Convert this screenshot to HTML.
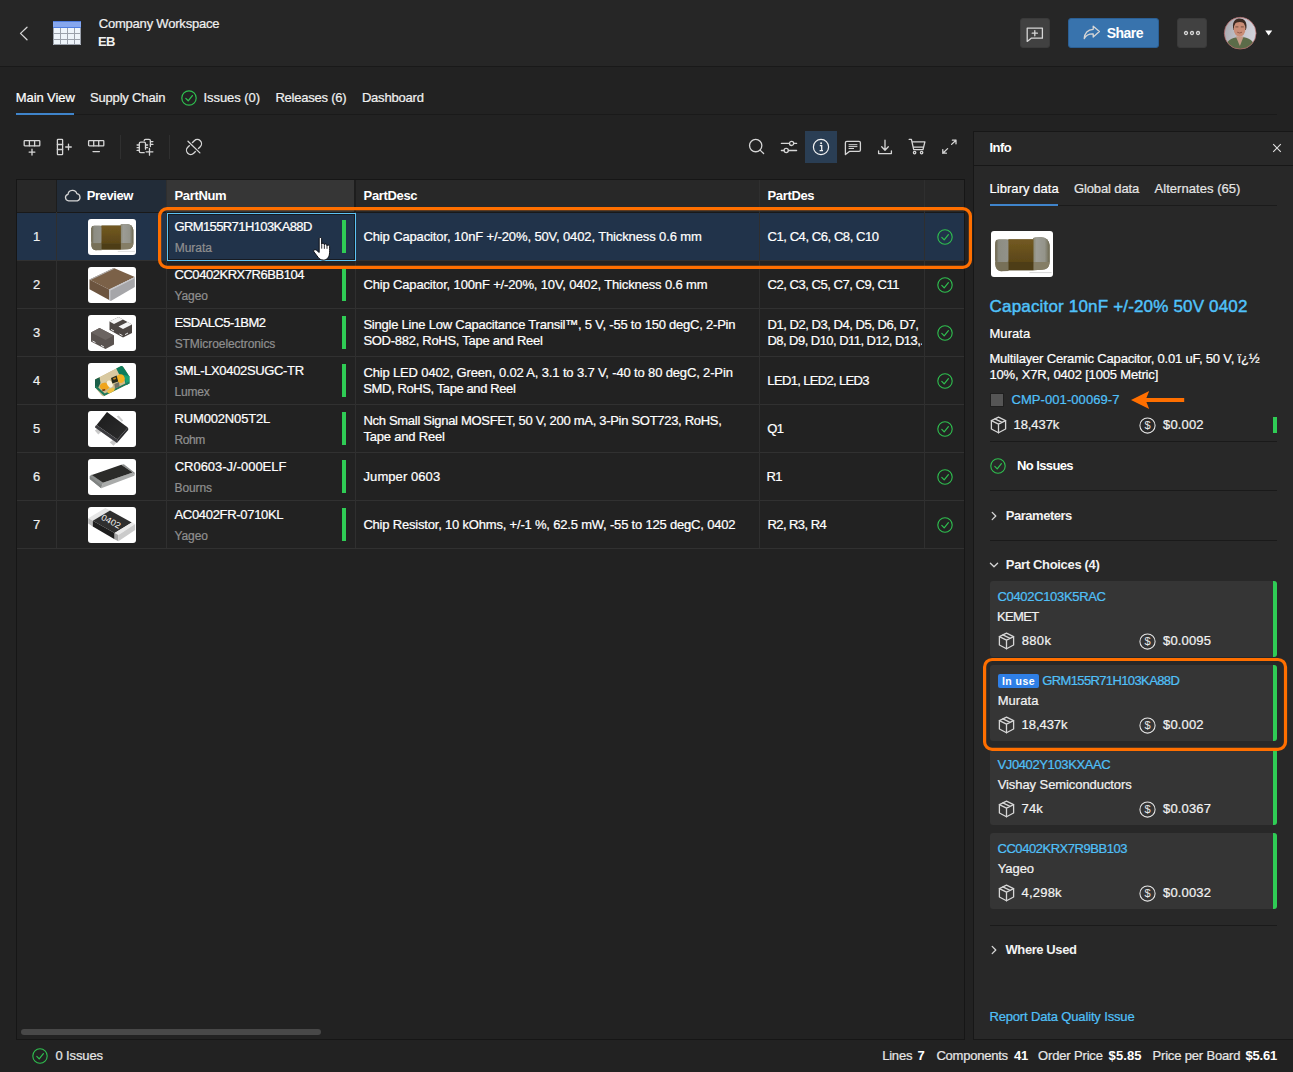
<!DOCTYPE html>
<html lang="en">
<head>
<meta charset="utf-8">
<title>BOM - Company Workspace</title>
<style>
*{box-sizing:border-box;margin:0;padding:0}
html,body{width:1293px;height:1072px;overflow:hidden;background:#222222}
body{position:relative;font-family:"Liberation Sans",sans-serif;font-size:13px;color:#f0f0f0;-webkit-font-smoothing:antialiased}
.abs{position:absolute}
.t{position:absolute;white-space:nowrap;line-height:16px;height:16px}
.t{-webkit-text-stroke:0.22px currentColor}
.b{font-weight:bold;-webkit-text-stroke:0}
.link{color:#50c0f8}
.gray{color:#8f8f8f}
svg{position:absolute;overflow:visible}
.ic{fill:none;stroke:#d6d6d6;stroke-width:1.3;stroke-linecap:round;stroke-linejoin:round}
/* header */
#hdr{left:0;top:0;width:1293px;height:67px;background:#262626;border-bottom:1px solid #191919}
.hbtn{position:absolute;top:18px;height:30px;border-radius:3px;background:#414141;border:1px solid #3a3a3a}
#share{left:1068px;width:91px;background:#3873ad;border:1px solid #2b5f94}
/* tabs */
#tabline{left:16px;top:114px;width:1261px;height:1px;background:#1a1a1a}
#tabact{left:16px;top:113px;width:58px;height:2px;background:#3f84cb}
/* table */
#tbl{left:16px;top:179px;width:949px;height:861px;border:1px solid #161616;background:#222222}
.vl{position:absolute;width:1px;background:#2f2f2f}
.hl{position:absolute;height:1px;background:#2f2f2f;left:17px;width:947px}
.thumb{position:absolute;left:88px;width:48px;height:36px;border-radius:3px;background:#fff;overflow:hidden}
.thumb svg{left:0;top:0}
.gbar{position:absolute;left:342px;width:4px;height:33px;background:#2fcc55}
/* info panel */
#info{left:973px;top:131px;width:321px;height:909px;background:#282828;border:1px solid #171717}
.sep{position:absolute;left:990px;width:287px;height:1px;background:#1a1a1a}
.card{position:absolute;left:990px;width:287px;height:76px;background:#353535;border-radius:3px;overflow:hidden}
.card:after{content:"";position:absolute;right:0;top:0;width:4px;height:100%;background:#2fcc55}
/* status */
#status{left:0;top:1040px;width:1293px;height:32px;background:#222222}
/*FIT*/
#t-cw{left:98.7px!important;letter-spacing:-0.197px}
#t-eb{left:98.0px!important;letter-spacing:-0.650px}
#t-share{left:1106.8px!important;letter-spacing:-0.544px}
#t-tab1{left:15.8px!important;letter-spacing:-0.093px}
#t-tab2{left:90.0px!important;letter-spacing:-0.177px}
#t-tab3{left:203.5px!important;letter-spacing:-0.068px}
#t-tab4{left:275.4px!important;letter-spacing:-0.225px}
#t-tab5{left:361.9px!important;letter-spacing:-0.201px}
#t-h1{left:86.7px!important;letter-spacing:-0.408px}
#t-h2{left:174.5px!important;letter-spacing:-0.341px}
#t-h3{left:363.6px!important;letter-spacing:-0.347px}
#t-h4{left:767.5px!important;letter-spacing:-0.349px}
#t-pn1{left:174.4px!important;letter-spacing:-0.597px}
#t-pn2{left:174.5px!important;letter-spacing:-0.460px}
#t-pn3{left:174.4px!important;letter-spacing:-0.537px}
#t-pn4{left:174.5px!important;letter-spacing:-0.348px}
#t-pn5{left:174.6px!important;letter-spacing:-0.171px}
#t-pn6{left:174.7px!important;letter-spacing:-0.019px}
#t-pn7{left:174.5px!important;letter-spacing:-0.311px}
#t-mf1{left:174.7px!important;letter-spacing:-0.027px}
#t-mf2{left:174.6px!important;letter-spacing:-0.142px}
#t-mf3{left:174.7px!important;letter-spacing:-0.080px}
#t-mf4{left:174.6px!important;letter-spacing:-0.206px}
#t-mf5{left:174.5px!important;letter-spacing:-0.454px}
#t-mf6{left:174.6px!important;letter-spacing:-0.139px}
#t-mf7{left:174.6px!important;letter-spacing:-0.142px}
#t-d1{left:363.4px!important;letter-spacing:-0.121px}
#t-d2{left:363.4px!important;letter-spacing:-0.146px}
#t-d3a{left:363.4px!important;letter-spacing:-0.219px}
#t-d3b{left:363.4px!important;letter-spacing:-0.279px}
#t-d4a{left:363.4px!important;letter-spacing:-0.148px}
#t-d4b{left:363.3px!important;letter-spacing:-0.397px}
#t-d5a{left:363.4px!important;letter-spacing:-0.294px}
#t-d5b{left:363.4px!important;letter-spacing:-0.188px}
#t-d6{left:363.5px!important;letter-spacing:0.074px}
#t-d7{left:363.4px!important;letter-spacing:-0.193px}
#t-s1{left:767.5px!important;letter-spacing:-0.427px}
#t-s2{left:767.5px!important;letter-spacing:-0.461px}
#t-s3a{left:767.5px!important;letter-spacing:-0.462px}
#t-s3b{left:767.4px!important;letter-spacing:-0.536px}
#t-s4{left:767.3px!important;letter-spacing:-0.650px}
#t-s5{left:767.3px!important;letter-spacing:-0.650px}
#t-s6{left:766.6px!important;letter-spacing:-0.650px}
#t-s7{left:767.4px!important;letter-spacing:-0.551px}
#t-info{left:989.4px!important;letter-spacing:-0.507px}
#t-it1{left:989.5px!important;letter-spacing:0.045px}
#t-it2{left:1073.9px!important;letter-spacing:-0.109px}
#t-it3{left:1154.5px!important;letter-spacing:0.049px}
#t-title{left:989.6px!important;letter-spacing:0.173px}
#t-mur{left:989.5px!important;letter-spacing:0.039px}
#t-ds1{left:989.4px!important;letter-spacing:-0.175px}
#t-ds2{left:989.4px!important;letter-spacing:-0.169px}
#t-cmp{left:1011.5px!important;letter-spacing:0.070px}
#t-q0{left:1013.5px!important;letter-spacing:-0.081px}
#t-p0{left:1163.1px!important;letter-spacing:0.122px}
#t-noi{left:1017.1px!important;letter-spacing:-0.614px}
#t-par{left:1005.8px!important;letter-spacing:-0.483px}
#t-pc{left:1005.8px!important;letter-spacing:-0.330px}
#t-cp0{left:997.5px!important;letter-spacing:-0.331px}
#t-cm0{left:997.0px!important;letter-spacing:-0.650px}
#t-q1{left:1021.7px!important;letter-spacing:0.349px}
#t-p1{left:1163.1px!important;letter-spacing:0.143px}
#t-cp1{left:1042.2px!important;letter-spacing:-0.619px}
#t-cm1{left:997.7px!important;letter-spacing:0.055px}
#t-q2{left:1021.5px!important;letter-spacing:-0.038px}
#t-p2{left:1163.1px!important;letter-spacing:0.122px}
#t-cp2{left:997.5px!important;letter-spacing:-0.382px}
#t-cm2{left:997.7px!important;letter-spacing:-0.077px}
#t-q3{left:1021.6px!important;letter-spacing:0.110px}
#t-p3{left:1163.1px!important;letter-spacing:0.143px}
#t-cp3{left:997.5px!important;letter-spacing:-0.460px}
#t-cm3{left:997.7px!important;letter-spacing:-0.068px}
#t-q4{left:1021.6px!important;letter-spacing:0.192px}
#t-p4{left:1163.1px!important;letter-spacing:0.143px}
#t-inuse{left:1001.9px!important;letter-spacing:0.459px}
#t-wu{left:1005.5px!important;letter-spacing:-0.414px}
#t-rep{left:989.4px!important;letter-spacing:-0.150px}
#t-st0{left:55.4px!important;letter-spacing:-0.115px}
#t-z1a{left:882.2px!important;letter-spacing:-0.216px}
#t-z1b{left:917.5px!important;letter-spacing:0.600px}
#t-z2a{left:936.4px!important;letter-spacing:-0.222px}
#t-z2b{left:1013.9px!important;letter-spacing:-0.234px}
#t-z3a{left:1038.1px!important;letter-spacing:-0.161px}
#t-z3b{left:1108.6px!important;letter-spacing:0.091px}
#t-z4a{left:1152.5px!important;letter-spacing:-0.175px}
#t-z4b{left:1245.4px!important;letter-spacing:-0.149px}
/*ENDFIT*/
</style>
</head>
<body>

<!-- ================= HEADER ================= -->
<div id="hdr" class="abs"></div>
<svg style="left:18px;top:25px" width="12" height="16" viewBox="0 0 12 16"><path class="ic" d="M9 2.3 L2.5 8.4 L9 14.7" stroke="#e2e2e2" stroke-width="1.3" stroke-linecap="butt" stroke-linejoin="miter"/></svg>
<svg style="left:53px;top:21px" width="28" height="24" viewBox="0 0 28 24">
  <rect x="0" y="0" width="28" height="24" fill="#eef4fa"/>
  <rect x="0" y="0" width="28" height="7" fill="#86a7ee"/>
  <path d="M0 0.5H28M0 6.5H28" stroke="#4f7de0" stroke-width="1" fill="none"/>
  <g stroke="#9ba1ab" stroke-width="1" fill="none">
    <path d="M0.5 7V23.5H27.5V7M0 12.5H28M0 18.5H28M7.5 7V24M14.5 7V24M21.5 7V24"/>
  </g>
</svg>
<div class="t" id="t-cw" style="left:99px;top:16px">Company Workspace</div>
<div class="t b" id="t-eb" style="left:99px;top:34px">EB</div>

<div class="hbtn" style="left:1020px;width:30px"></div>
<svg style="left:1026px;top:26.5px" width="18" height="16" viewBox="0 0 18 16"><path class="ic" d="M1.2 1.2H16.4V11.2H5.2L1.2 14.4Z M8.8 3.6V8.8M6.2 6.2H11.4" stroke="#e6e6e6"/></svg>
<div class="hbtn" id="share"></div>
<svg style="left:1083px;top:25px" width="18" height="15" viewBox="0 0 18 15"><path class="ic" stroke="#fff" d="M10.2 1.2 L16.4 6.6 L10.2 12 V8.9 C5.6 8.7 3 10.4 1.2 13.6 C1.6 8.2 4.8 4.6 10.2 4.3 Z"/></svg>
<div class="t b" id="t-share" style="left:1107px;top:25px;font-size:14px;color:#fff">Share</div>
<div class="hbtn" style="left:1177px;width:30px"></div>
<svg style="left:1183px;top:30px" width="18" height="6" viewBox="0 0 18 6"><g class="ic" stroke="#e0e0e0" stroke-width="1.1"><circle cx="3" cy="3" r="1.5"/><circle cx="9" cy="3" r="1.5"/><circle cx="15" cy="3" r="1.5"/></g></svg>
<!-- avatar -->
<svg style="left:1224px;top:16.7px" width="32.4" height="32.4" viewBox="0 0 32.4 32.4">
  <defs><clipPath id="avc"><circle cx="16.2" cy="16.2" r="15.9"/></clipPath>
  <linearGradient id="avbg" x1="0" y1="0" x2="1" y2="0.2"><stop offset="0" stop-color="#a6a6ab"/><stop offset="0.55" stop-color="#c3c3cb"/><stop offset="1" stop-color="#d2d2da"/></linearGradient>
  <filter id="avbl" x="-10%" y="-10%" width="120%" height="120%"><feGaussianBlur stdDeviation="0.55"/></filter></defs>
  <g clip-path="url(#avc)">
    <rect width="33" height="33" fill="url(#avbg)"/>
    <g filter="url(#avbl)">
      <path d="M1 33 C1.6 24.6 6 21.6 11.6 20.4 L20 20.2 C26 21.4 30.6 24.4 31.4 33 Z" fill="#5b6c48"/>
      <path d="M11.8 19.4 L15.9 29 L19.6 19.4 Z" fill="#c49a86"/>
      <path d="M9 10.5 C8.4 3.8 12 1.4 15.6 1.4 C19.8 1.4 23.2 4 22.4 11 L21.8 13 L9.6 13 Z" fill="#3b2a22"/>
      <ellipse cx="15.6" cy="11.8" rx="5.9" ry="8" fill="#c98d76"/>
      <path d="M10 7.6 C11 3.4 13.6 2.6 15.8 2.6 C18.6 2.6 20.6 3.8 21.4 7.6 C19.6 5.6 18 5 15.8 5 C13.4 5 11.6 5.6 10 7.6Z" fill="#3b2a22"/>
      <path d="M11.4 9.9 H14.4 M16.8 9.9 H19.8" stroke="#6d4a3c" stroke-width="0.9"/>
      <path d="M13.2 15.2 Q15.6 16.8 18 15.2" stroke="#8a5547" stroke-width="0.9" fill="none"/>
    </g>
  </g>
  <circle cx="16.2" cy="16.2" r="15.9" fill="none" stroke="#b56262" stroke-width="0.7"/>
</svg>
<svg style="left:1265.4px;top:30.4px" width="7.4" height="6" viewBox="0 0 7.4 6"><path d="M0.2 0.4H7.2L3.7 5.6Z" fill="#fff"/></svg>

<!-- ================= TABS ================= -->
<div id="tabline" class="abs"></div>
<div id="tabact" class="abs"></div>
<div class="t" id="t-tab1" style="left:16px;top:90px;color:#fff">Main View</div>
<div class="t" id="t-tab2" style="left:90px;top:90px">Supply Chain</div>
<svg style="left:181px;top:90px" width="16" height="16" viewBox="0 0 16 16"><circle cx="8" cy="8" r="7.2" fill="none" stroke="#2fbf4f" stroke-width="1.2"/><path d="M4.8 8.4 L7.2 10.8 L11.4 5.6" fill="none" stroke="#2fbf4f" stroke-width="1.3" stroke-linecap="round" stroke-linejoin="round"/></svg>
<div class="t" id="t-tab3" style="left:204px;top:90px">Issues (0)</div>
<div class="t" id="t-tab4" style="left:276px;top:90px">Releases (6)</div>
<div class="t" id="t-tab5" style="left:362px;top:90px">Dashboard</div>

<!-- ================= TOOLBAR ================= -->
<!-- add row -->
<svg style="left:23px;top:139px" width="18" height="17" viewBox="0 0 18 17"><g class="ic" stroke-width="1.2"><rect x="1.2" y="1.6" width="15.6" height="5.2" rx="0.6"/><path d="M6.4 1.6V6.8M11.6 1.6V6.8M9 10.2V16M6.1 13.1H11.9"/></g></svg>
<!-- add column -->
<svg style="left:56px;top:138px" width="18" height="18" viewBox="0 0 18 18"><g class="ic" stroke-width="1.2"><rect x="1.4" y="1.4" width="5.2" height="15.2" rx="0.6"/><path d="M1.4 6.5H6.6M1.4 11.5H6.6M12.5 6.2V11.8M9.7 9H15.3"/></g></svg>
<!-- remove row -->
<svg style="left:87px;top:139px" width="18" height="17" viewBox="0 0 18 17"><g class="ic" stroke-width="1.2"><rect x="1.6" y="1.6" width="15.2" height="5.2" rx="0.6"/><path d="M6.7 1.6V6.8M11.7 1.6V6.8M6 12.6H12.4"/></g></svg>
<div class="abs" style="left:120px;top:135px;width:1px;height:24px;background:#2f2f2f"></div>
<!-- component add -->
<svg style="left:136px;top:138px" width="18" height="18" viewBox="0 0 18 18"><g class="ic" stroke-width="1.15" stroke="#dedede"><path d="M9.5 11.2 V5.6 Q9.5 4.2 8.1 4.2 H4.7 Q3.3 4.2 3.3 5.6 V13.3 Q3.3 14.7 4.7 14.7 H8.2"/><path d="M8.2 2.6 Q8.2 1.4 9.6 1.4 H13 Q14.4 1.4 14.4 2.8 V8.6"/><path d="M1.1 7H3.3M1.1 9.7H3.3M1.1 12.4H3.3M9.5 7H11.6M9.5 9.7H11.6M14.4 3.6H16.9M14.4 6.4H16.9M13.5 10.4V17.2M10.1 13.8H16.9"/></g></svg>
<div class="abs" style="left:169px;top:135px;width:1px;height:24px;background:#2f2f2f"></div>
<!-- unlink -->
<svg style="left:185px;top:138px" width="19" height="18" viewBox="0 0 19 18"><g class="ic" stroke="#a6a6a6" stroke-width="1.1"><rect x="-8.85" y="-4.2" width="17.7" height="8.4" rx="4.2" transform="translate(9 9) rotate(-45)"/><path d="M2.6 2.9 L15.2 15.3" stroke="#222222" stroke-width="3.4" stroke-linecap="butt"/><path d="M3 3.3 L14.9 14.9"/></g></svg>

<!-- right icons -->
<svg style="left:747px;top:138px" width="19" height="18" viewBox="0 0 19 18"><g class="ic" stroke-width="1.25"><circle cx="8.7" cy="7.6" r="6.15"/><path d="M13.1 12.1 L16.6 15.5"/></g></svg>
<svg style="left:780px;top:139px" width="18" height="16" viewBox="0 0 18 16"><g class="ic" stroke-width="1.15"><path d="M1.4 4.4H9.3M13.9 4.4H16.6M1.4 11.5H3.9M8.5 11.5H16.6"/><circle cx="11.6" cy="4.4" r="2.1"/><circle cx="6.2" cy="11.5" r="2.1"/></g></svg>
<div class="abs" style="left:805px;top:131px;width:32px;height:32px;background:#2a3e54"></div>
<svg style="left:812px;top:138px" width="18" height="18" viewBox="0 0 18 18"><circle cx="9" cy="9" r="7.6" fill="none" stroke="#f2f2f2" stroke-width="1.2"/><path d="M7.8 7.6H9.7V12.6M7.6 12.7H11" fill="none" stroke="#f2f2f2" stroke-width="1.3"/><circle cx="9.1" cy="5.2" r="1" fill="#f2f2f2"/></svg>
<svg style="left:844px;top:140px" width="18" height="16" viewBox="0 0 18 16"><g class="ic" stroke-width="1.15"><path d="M2.8 1.4H15 Q16.4 1.4 16.4 2.8V10 Q16.4 11.4 15 11.4H5.4L1.4 14.6V2.8 Q1.4 1.4 2.8 1.4Z"/><path d="M5 4.7H13M5 6.6H13M5 8.5H9.6" stroke-width="1"/></g></svg>
<svg style="left:877px;top:139px" width="16" height="16" viewBox="0 0 16 16"><g class="ic" stroke-width="1.25"><path d="M8 1.2V11M4.7 7.8L8 11.2L11.3 7.8M1.6 12V14.6H14.4V12"/></g></svg>
<svg style="left:908px;top:138px" width="18" height="18" viewBox="0 0 18 18"><g class="ic" stroke-width="1.1"><path d="M1.2 1.4H3.4L5.7 11.6H15L16.9 3.8H4M5 9.1H15.6"/><circle cx="6.6" cy="14.6" r="1.2"/><circle cx="13.6" cy="14.6" r="1.2"/></g></svg>
<svg style="left:941px;top:139px" width="16" height="16" viewBox="0 0 16 16"><g class="ic" stroke-width="1.15"><path d="M10.6 5.4L15 1.2M11.4 1.2H15V4.8M6.6 9.6L1.8 14.2M1.8 10.6V14.2H5.4"/></g></svg>

<!-- ================= TABLE ================= -->
<div id="tbl" class="abs"></div>
<div class="abs" style="left:17px;top:180px;width:947px;height:32px;background:#282828"></div>
<div class="abs" style="left:57px;top:180px;width:109px;height:32px;background:#222c38"></div>
<div class="abs" style="left:166px;top:180px;width:188px;height:32px;background:#363636"></div>
<div class="abs" style="left:17px;top:213px;width:947px;height:47px;background:#21334a"></div>
<div class="hl" style="top:212px;background:#191919"></div>
<div class="hl" style="top:260px;background:#313131"></div>
<div class="hl" style="top:308px;background:#313131"></div>
<div class="hl" style="top:356px;background:#313131"></div>
<div class="hl" style="top:404px;background:#313131"></div>
<div class="hl" style="top:452px;background:#313131"></div>
<div class="hl" style="top:500px;background:#313131"></div>
<div class="hl" style="top:548px;background:#313131"></div>
<div class="vl" style="left:56px;top:180px;height:368px"></div>
<div class="vl" style="left:166px;top:180px;height:368px"></div>
<div class="vl" style="left:355px;top:180px;height:368px"></div>
<div class="vl" style="left:759px;top:180px;height:368px"></div>
<div class="vl" style="left:924px;top:180px;height:368px"></div>
<div class="vl" style="left:354px;top:180px;height:32px;width:2px;background:#1d1d1d"></div><div class="vl" style="left:56px;top:180px;height:32px;background:#1d1d1d"></div>
<svg style="left:64px;top:188px" width="18" height="14" viewBox="0 0 18 14"><path class="ic" stroke="#e4e4e4" stroke-width="1.1" d="M4.6 12.8 A3.3 3.3 0 0 1 4 6.3 A4.5 4.5 0 0 1 12.8 5.6 A3.7 3.7 0 0 1 13.4 12.8 Z"/></svg>
<div class="t b" id="t-h1" style="left:87px;top:188px;color:#fff">Preview</div>
<div class="t b" id="t-h2" style="left:175px;top:188px;color:#fff">PartNum</div>
<div class="t b" id="t-h3" style="left:364px;top:188px;color:#fff">PartDesc</div>
<div class="t b" id="t-h4" style="left:768px;top:188px;color:#fff">PartDes</div>
<!-- row 1 -->
<div class="t" id="t-n1" style="left:32px;top:229px;width:9px;text-align:center">1</div>
<div class="thumb" style="top:219px"><svg width="48" height="36" viewBox="0 0 62 46"><defs><linearGradient id="ctb" x1="0" y1="0" x2="0" y2="1"><stop offset="0" stop-color="#735a22"/><stop offset="1" stop-color="#5b4618"/></linearGradient><linearGradient id="cte" x1="0" y1="0" x2="1" y2="0"><stop offset="0" stop-color="#6a6248"/><stop offset="0.25" stop-color="#8d8d82"/><stop offset="1" stop-color="#92928a"/></linearGradient><linearGradient id="ctr" x1="0" y1="0" x2="1" y2="0"><stop offset="0" stop-color="#8b8a76"/><stop offset="0.2" stop-color="#9c9c95"/><stop offset="0.7" stop-color="#94948a"/><stop offset="1" stop-color="#6d684f"/></linearGradient><filter id="ctf" x="-5%" y="-5%" width="110%" height="110%"><feGaussianBlur stdDeviation="0.6"/></filter></defs><g filter="url(#ctf)"><path d="M8 8.6 H17.6 V8.2 H42.2 V7 Q44 6.2 50 6.3 Q57.5 6.6 58.6 14 V32 Q58 38.6 51 38.8 L42.4 39.2 H17.6 L10 40.2 Q4.6 39.6 4.2 33 V14 Q4.4 9 8 8.6Z" fill="#7c765e"/><rect x="4.3" y="8.6" width="13.4" height="22.6" rx="3" fill="url(#cte)"/><path d="M42.3 7 Q44 6.2 50 6.3 Q57.5 6.6 58.6 14 V31 H42.3Z" fill="url(#ctr)"/><path d="M4.3 31 H17.6 V40 L10 40.2 Q4.6 39.6 4.3 33Z" fill="#777058"/><path d="M42.4 31 H58.6 V32 Q58 38.6 51 38.8 L42.4 39.2Z" fill="#857e66"/><rect x="17.5" y="8.3" width="24.9" height="23" fill="url(#ctb)"/><rect x="17.5" y="31" width="24.9" height="8.3" fill="#4e3e17"/></g><path d="M38.5 41.6 H60.6" stroke="#c4c4c4" stroke-width="0.7"/></svg></div>
<div class="t" id="t-pn1" style="left:175px;top:219px;color:#fff">GRM155R71H103KA88D</div>
<div class="t gray" id="t-mf1" style="left:175px;top:239.5px;font-size:12px">Murata</div>
<div class="gbar" style="top:220px"></div>
<div class="t" id="t-d1" style="left:364px;top:229px;color:#fff">Chip Capacitor, 10nF +/-20%, 50V, 0402, Thickness 0.6 mm</div>
<div class="t" id="t-s1" style="left:768px;top:229px;color:#fff">C1, C4, C6, C8, C10</div>
<svg style="left:937px;top:229px" width="16" height="16" viewBox="0 0 16 16"><circle cx="8" cy="8" r="7.2" fill="none" stroke="#2fbf4f" stroke-width="1.1"/><path d="M4.8 8.4 L7.2 10.8 L11.4 5.6" fill="none" stroke="#2fbf4f" stroke-width="1.2" stroke-linecap="round" stroke-linejoin="round"/></svg>
<!-- row 2 -->
<div class="t" id="t-n2" style="left:32px;top:277px;width:9px;text-align:center">2</div>
<div class="thumb" style="top:267px"><svg width="48" height="36" viewBox="0 0 48 36"><path d="M1.5 12.5 L25.8 1 L46.8 10 L21.2 22.6Z" fill="#7b6148"/><path d="M1.5 12.5 L21.2 22.6 V33.1 L1.5 22.2Z" fill="#6c543f"/><path d="M21.2 22.6 L46.8 10 V20.1 L22.8 34 L21.2 33.1Z" fill="#a6a6a9"/><path d="M1.5 12.5 L25.8 1 L26.8 1.5 L2.6 13.1Z" fill="#b4b4b6"/><path d="M21.2 22.6 L46.8 10 L46.8 11.2 L22.4 23.4 V33.8 L21.2 33.1Z" fill="#c9c9cc"/></svg></div>
<div class="t" id="t-pn2" style="left:175px;top:267px;color:#fff">CC0402KRX7R6BB104</div>
<div class="t gray" id="t-mf2" style="left:175px;top:287.5px;font-size:12px">Yageo</div>
<div class="gbar" style="top:268px"></div>
<div class="t" id="t-d2" style="left:364px;top:277px;color:#fff">Chip Capacitor, 100nF +/-20%, 10V, 0402, Thickness 0.6 mm</div>
<div class="t" id="t-s2" style="left:768px;top:277px;color:#fff">C2, C3, C5, C7, C9, C11</div>
<svg style="left:937px;top:277px" width="16" height="16" viewBox="0 0 16 16"><circle cx="8" cy="8" r="7.2" fill="none" stroke="#2fbf4f" stroke-width="1.1"/><path d="M4.8 8.4 L7.2 10.8 L11.4 5.6" fill="none" stroke="#2fbf4f" stroke-width="1.2" stroke-linecap="round" stroke-linejoin="round"/></svg>
<!-- row 3 -->
<div class="t" id="t-n3" style="left:32px;top:325px;width:9px;text-align:center">3</div>
<div class="thumb" style="top:315px"><svg width="48" height="36" viewBox="0 0 48 36"><path d="M3 17.5 L11.5 13 L26 20.5 V29.5 L17.5 34 L3 26.5Z" fill="#5a5350"/><path d="M3 17.5 L11.5 13 L26 20.5 L17.5 25Z" fill="#6b6461"/><path d="M21.5 6.5 L30.5 2 L44 9.5 V18 L35 22.5 L21.5 15Z" fill="#4c4643"/><path d="M21.5 6.5 L30.5 2 L35 4.5 L26 9Z" fill="#f4f4f4"/><path d="M30.5 11.5 L39.5 7 L44 9.5 L35 14Z" fill="#f4f4f4"/><path d="M4.5 26 l3 1.6 M13 30.4 l3 1.6 M23 14.4 l3 1.6 M31.5 19 l3 1.6 M37 19.6 l3-1.6" stroke="#e8e8e8" stroke-width="1"/></svg></div>
<div class="t" id="t-pn3" style="left:175px;top:315px;color:#fff">ESDALC5-1BM2</div>
<div class="t gray" id="t-mf3" style="left:175px;top:335.5px;font-size:12px">STMicroelectronics</div>
<div class="gbar" style="top:316px"></div>
<div class="t" id="t-d3a" style="left:364px;top:317px;color:#fff">Single Line Low Capacitance Transil™, 5 V, -55 to 150 degC, 2-Pin</div>
<div class="t" id="t-d3b" style="left:364px;top:333px;color:#fff">SOD-882, RoHS, Tape and Reel</div>
<div class="t" id="t-s3a" style="left:768px;top:317px;color:#fff">D1, D2, D3, D4, D5, D6, D7,</div>
<div class="t" id="t-s3b" style="left:768px;top:333px;color:#fff;width:155px;overflow:hidden">D8, D9, D10, D11, D12, D13,.</div>
<svg style="left:937px;top:325px" width="16" height="16" viewBox="0 0 16 16"><circle cx="8" cy="8" r="7.2" fill="none" stroke="#2fbf4f" stroke-width="1.1"/><path d="M4.8 8.4 L7.2 10.8 L11.4 5.6" fill="none" stroke="#2fbf4f" stroke-width="1.2" stroke-linecap="round" stroke-linejoin="round"/></svg>
<!-- row 4 -->
<div class="t" id="t-n4" style="left:32px;top:373px;width:9px;text-align:center">4</div>
<div class="thumb" style="top:363px"><svg width="48" height="36" viewBox="0 0 48 36"><defs><filter id="bl4" x="-10%" y="-10%" width="120%" height="120%"><feGaussianBlur stdDeviation="0.6"/></filter><clipPath id="ledc"><path d="M7 16.4 L33 3 Q34.4 2.6 35.4 4 L41.4 13.6 V20.4 L16.4 33 Q15 33.6 13.8 32.4 L7 24.4 Z"/></clipPath></defs>
<g filter="url(#bl4)"><g clip-path="url(#ledc)">
<rect width="48" height="36" fill="#cdbb8c"/>
<path d="M7 16.4 L33 3 L37 9 L10.5 22.6Z" fill="#d9c9a0"/>
<path d="M28 5 L34 2 L42 13 V21 L38 23 L36 15 L31 11Z" fill="#0f7c5c"/>
<path d="M36 12 L42 13 V21 L38.5 22.5Z" fill="#12a273"/>
<path d="M6 16 L11.5 14 L12.5 20 L10 25 L7 25Z" fill="#1d5f48"/>
<path d="M7 24.4 L16.4 33 L41.4 20.4 V18.6 L16.8 30.6 L8 22.6Z" fill="#1f7a5c"/>
<ellipse cx="16.5" cy="23.4" rx="4.6" ry="3.6" fill="#f0a51c"/>
<ellipse cx="32.6" cy="15.6" rx="4.2" ry="4.4" fill="#f3b124"/>
<ellipse cx="23" cy="27.6" rx="4" ry="2" fill="#f0c040" transform="rotate(-27 23 27.6)"/>
<ellipse cx="21.8" cy="21" rx="2.6" ry="3.8" fill="#fbf3dc" transform="rotate(-30 21.8 21)"/>
<path d="M23 15 L28.6 12.6 L30.2 18.4 L24.4 20.6Z" fill="#272b1b"/>
<path d="M25 15.2 L27.6 14.2 L28 16 L25.6 16.8Z" fill="#c98a1c"/>
<path d="M26.4 21 L31 19 L31.6 23.6 L27 25.4Z" fill="#6f6f62"/>
<path d="M14 26.6 L17 26 L17.4 27.6 L14.6 28.2Z" fill="#7a3a12"/>
</g></g></svg></div>
<div class="t" id="t-pn4" style="left:175px;top:363px;color:#fff">SML-LX0402SUGC-TR</div>
<div class="t gray" id="t-mf4" style="left:175px;top:383.5px;font-size:12px">Lumex</div>
<div class="gbar" style="top:364px"></div>
<div class="t" id="t-d4a" style="left:364px;top:365px;color:#fff">Chip LED 0402, Green, 0.02 A, 3.1 to 3.7 V, -40 to 80 degC, 2-Pin</div>
<div class="t" id="t-d4b" style="left:364px;top:381px;color:#fff">SMD, RoHS, Tape and Reel</div>
<div class="t" id="t-s4" style="left:768px;top:373px;color:#fff">LED1, LED2, LED3</div>
<svg style="left:937px;top:373px" width="16" height="16" viewBox="0 0 16 16"><circle cx="8" cy="8" r="7.2" fill="none" stroke="#2fbf4f" stroke-width="1.1"/><path d="M4.8 8.4 L7.2 10.8 L11.4 5.6" fill="none" stroke="#2fbf4f" stroke-width="1.2" stroke-linecap="round" stroke-linejoin="round"/></svg>
<!-- row 5 -->
<div class="t" id="t-n5" style="left:32px;top:421px;width:9px;text-align:center">5</div>
<div class="thumb" style="top:411px"><svg width="48" height="36" viewBox="0 0 48 36"><defs><linearGradient id="s5g" x1="0" y1="0" x2="1" y2="1"><stop offset="0" stop-color="#1c1c1c"/><stop offset="1" stop-color="#2c2c2d"/></linearGradient></defs><path d="M28.6 5.4 L30.7 4.6 L35.2 9.6 L33.8 10.8Z" fill="#cfcfcf"/><path d="M6.8 19.5 L10.3 16.9 L13.6 20.4 L10.3 23.5Z" fill="#c9c9c9"/><path d="M21.6 31.2 L25 29 L28.3 31.7 L25.5 34.8Z" fill="#c9c9c9"/><path d="M7.3 15 L8.6 13.9 L29.4 28.6 L28.9 31.9 L7 16.4Z" fill="#3b3b3f"/><path d="M29.4 28.6 L39.8 16.5 Q40.6 17.6 40.2 18.9 L28.9 31.9Z" fill="#29292c"/><path d="M19 1.1 L39.8 16.5 L29.4 28.6 L8.6 13.9Z" fill="url(#s5g)"/></svg></div>
<div class="t" id="t-pn5" style="left:175px;top:411px;color:#fff">RUM002N05T2L</div>
<div class="t gray" id="t-mf5" style="left:175px;top:431.5px;font-size:12px">Rohm</div>
<div class="gbar" style="top:412px"></div>
<div class="t" id="t-d5a" style="left:364px;top:413px;color:#fff">Nch Small Signal MOSFET, 50 V, 200 mA, 3-Pin SOT723, RoHS,</div>
<div class="t" id="t-d5b" style="left:364px;top:429px;color:#fff">Tape and Reel</div>
<div class="t" id="t-s5" style="left:768px;top:421px;color:#fff">Q1</div>
<svg style="left:937px;top:421px" width="16" height="16" viewBox="0 0 16 16"><circle cx="8" cy="8" r="7.2" fill="none" stroke="#2fbf4f" stroke-width="1.1"/><path d="M4.8 8.4 L7.2 10.8 L11.4 5.6" fill="none" stroke="#2fbf4f" stroke-width="1.2" stroke-linecap="round" stroke-linejoin="round"/></svg>
<!-- row 6 -->
<div class="t" id="t-n6" style="left:32px;top:469px;width:9px;text-align:center">6</div>
<div class="thumb" style="top:459px"><svg width="48" height="36" viewBox="0 0 48 36"><path d="M1.8 17.1 L3.9 15.6 L15.1 24 L13.2 29.3 L1.8 20.1Z" fill="#8d908f"/><path d="M1.8 17.1 L13.2 26.2 V29.3 L1.8 20.1Z" fill="#7f8281"/><path d="M33.3 5.8 L35.9 5.3 L46.8 13.8 L46.3 16.7 L44.7 13.4Z" fill="#8d908f"/><path d="M14.9 23.8 L44.7 13.4 L46.3 16.7 L13.2 29.3Z" fill="#a9abaa"/><path d="M3.9 15.9 L33.3 5.8 L44.7 13.4 L14.9 23.8Z" fill="#2b2b29"/></svg></div>
<div class="t" id="t-pn6" style="left:175px;top:459px;color:#fff">CR0603-J/-000ELF</div>
<div class="t gray" id="t-mf6" style="left:175px;top:479.5px;font-size:12px">Bourns</div>
<div class="gbar" style="top:460px"></div>
<div class="t" id="t-d6" style="left:364px;top:469px;color:#fff">Jumper 0603</div>
<div class="t" id="t-s6" style="left:768px;top:469px;color:#fff">R1</div>
<svg style="left:937px;top:469px" width="16" height="16" viewBox="0 0 16 16"><circle cx="8" cy="8" r="7.2" fill="none" stroke="#2fbf4f" stroke-width="1.1"/><path d="M4.8 8.4 L7.2 10.8 L11.4 5.6" fill="none" stroke="#2fbf4f" stroke-width="1.2" stroke-linecap="round" stroke-linejoin="round"/></svg>
<!-- row 7 -->
<div class="t" id="t-n7" style="left:32px;top:517px;width:9px;text-align:center">7</div>
<div class="thumb" style="top:507px"><svg width="48" height="36" viewBox="0 0 48 36"><path d="M0.2 11.2 L17.4 1.1 L22 3.6 L4.8 13.7Z" fill="#e6e6e6"/><path d="M0.2 11.2 L4.8 13.7 V19.6 L0.2 16.6Z" fill="#b9b9b9"/><path d="M4.8 13.7 L22 3.6 L43.8 15.4 L26.6 25.9Z" fill="#2f2f2f"/><path d="M4.8 13.7 L26.6 25.9 V32.2 L4.8 19.6Z" fill="#1e1e1e"/><path d="M26.6 25.9 L43.8 15.4 L47.2 17 L30.4 28Z" fill="#e9e9e9"/><path d="M26.6 25.9 L30.4 28 V34.3 L26.6 32.2Z" fill="#a4a4a4"/><path d="M30.4 28 L47.2 17 V22.9 L30.4 34.3Z" fill="#cbcbcb"/><text x="0" y="0" transform="translate(12.6 12.2) rotate(28)" font-family="Liberation Sans, sans-serif" font-size="8.6" fill="#f4f4f4" textLength="20.5" lengthAdjust="spacingAndGlyphs">0402</text></svg></div>
<div class="t" id="t-pn7" style="left:175px;top:507px;color:#fff">AC0402FR-0710KL</div>
<div class="t gray" id="t-mf7" style="left:175px;top:527.5px;font-size:12px">Yageo</div>
<div class="gbar" style="top:508px"></div>
<div class="t" id="t-d7" style="left:364px;top:517px;color:#fff">Chip Resistor, 10 kOhms, +/-1 %, 62.5 mW, -55 to 125 degC, 0402</div>
<div class="t" id="t-s7" style="left:768px;top:517px;color:#fff">R2, R3, R4</div>
<svg style="left:937px;top:517px" width="16" height="16" viewBox="0 0 16 16"><circle cx="8" cy="8" r="7.2" fill="none" stroke="#2fbf4f" stroke-width="1.1"/><path d="M4.8 8.4 L7.2 10.8 L11.4 5.6" fill="none" stroke="#2fbf4f" stroke-width="1.2" stroke-linecap="round" stroke-linejoin="round"/></svg>
<div class="abs" style="left:167px;top:213px;width:189px;height:48px;border:1px solid #5cc3f5;box-shadow:inset 0 0 0 1px #171b22"></div>
<div class="abs" style="left:21px;top:1029px;width:300px;height:6px;border-radius:3px;background:#484848"></div>

<!-- ================= INFO PANEL ================= -->
<div id="info" class="abs"></div>
<div class="t" id="t-info" style="left:990px;top:140px;color:#fff;font-weight:bold;-webkit-text-stroke:0">Info</div>
<svg style="left:1272px;top:143px" width="10" height="10" viewBox="0 0 10 10"><path d="M1.2 1.2L8.8 8.8M8.8 1.2L1.2 8.8" stroke="#e0e0e0" stroke-width="1.1" fill="none"/></svg>
<div class="abs" style="left:974px;top:165px;width:319px;height:1px;background:#171717"></div>
<div class="t" id="t-it1" style="left:990px;top:181px;color:#fff">Library data</div>
<div class="t" id="t-it2" style="left:1075px;top:181px;color:#e4e4e4">Global data</div>
<div class="t" id="t-it3" style="left:1155px;top:181px;color:#e4e4e4">Alternates (65)</div>
<div class="abs" style="left:990px;top:205px;width:287px;height:1px;background:#1b1b1b"></div>
<div class="abs" style="left:990px;top:204px;width:68px;height:2px;background:#3f84cb"></div>
<div class="abs" style="left:991px;top:231px;width:62px;height:46px;border-radius:3px;background:#fff;overflow:hidden"><svg style="left:0;top:0" width="62" height="46" viewBox="0 0 62 46"><defs><linearGradient id="cib" x1="0" y1="0" x2="0" y2="1"><stop offset="0" stop-color="#735a22"/><stop offset="1" stop-color="#5b4618"/></linearGradient><linearGradient id="cie" x1="0" y1="0" x2="1" y2="0"><stop offset="0" stop-color="#6a6248"/><stop offset="0.25" stop-color="#8d8d82"/><stop offset="1" stop-color="#92928a"/></linearGradient><linearGradient id="cir" x1="0" y1="0" x2="1" y2="0"><stop offset="0" stop-color="#8b8a76"/><stop offset="0.2" stop-color="#9c9c95"/><stop offset="0.7" stop-color="#94948a"/><stop offset="1" stop-color="#6d684f"/></linearGradient><filter id="cif" x="-5%" y="-5%" width="110%" height="110%"><feGaussianBlur stdDeviation="0.6"/></filter></defs><g filter="url(#cif)"><path d="M8 8.6 H17.6 V8.2 H42.2 V7 Q44 6.2 50 6.3 Q57.5 6.6 58.6 14 V32 Q58 38.6 51 38.8 L42.4 39.2 H17.6 L10 40.2 Q4.6 39.6 4.2 33 V14 Q4.4 9 8 8.6Z" fill="#7c765e"/><rect x="4.3" y="8.6" width="13.4" height="22.6" rx="3" fill="url(#cie)"/><path d="M42.3 7 Q44 6.2 50 6.3 Q57.5 6.6 58.6 14 V31 H42.3Z" fill="url(#cir)"/><path d="M4.3 31 H17.6 V40 L10 40.2 Q4.6 39.6 4.3 33Z" fill="#777058"/><path d="M42.4 31 H58.6 V32 Q58 38.6 51 38.8 L42.4 39.2Z" fill="#857e66"/><rect x="17.5" y="8.3" width="24.9" height="23" fill="url(#cib)"/><rect x="17.5" y="31" width="24.9" height="8.3" fill="#4e3e17"/></g><path d="M38.5 41.6 H60.6" stroke="#c4c4c4" stroke-width="0.7"/></svg></div>
<div class="t link" id="t-title" style="left:990px;top:297px;font-size:17px;line-height:20px;height:20px;color:#50c2fa;-webkit-text-stroke:0.45px #50c2fa">Capacitor 10nF +/-20% 50V 0402</div>
<div class="t" id="t-mur" style="left:990px;top:326px;color:#fff">Murata</div>
<div class="t" id="t-ds1" style="left:990px;top:351px;color:#fff">Multilayer Ceramic Capacitor, 0.01 uF, 50 V, ï¿½</div>
<div class="t" id="t-ds2" style="left:990px;top:367px;color:#fff">10%, X7R, 0402 [1005 Metric]</div>
<div class="abs" style="left:990px;top:393px;width:14px;height:14px;background:#555555;border:1px solid #1f1f1f"></div>
<div class="t link" id="t-cmp" style="left:1012px;top:392px">CMP-001-00069-7</div>
<svg style="left:990px;top:416px" width="17" height="18" viewBox="0 0 17 18"><g class="ic" stroke="#e6e6e6" stroke-width="1.05"><path d="M8.5 1.2 L15.6 4.6 V13 L8.5 16.8 L1.4 13 V4.6 Z"/><path d="M1.4 4.6 L8.5 8.2 L15.6 4.6 M8.5 8.2 V16.8 M4.9 2.9 L12.1 6.4"/></g></svg>
<div class="t" id="t-q0" style="left:1014px;top:417px;color:#f2f2f2">18,437k</div>
<svg style="left:1138.5px;top:416.5px" width="17" height="17" viewBox="0 0 17 17"><circle cx="8.5" cy="8.5" r="7.6" fill="none" stroke="#e6e6e6" stroke-width="1.05"/><text x="8.5" y="12.4" text-anchor="middle" font-family="Liberation Sans, sans-serif" font-size="11" fill="#e6e6e6">$</text></svg>
<div class="t" id="t-p0" style="left:1164px;top:417px;color:#f2f2f2">$0.002</div>
<div class="abs" style="left:1273px;top:417px;width:4px;height:16px;background:#2fcc55"></div>
<div class="sep" style="top:441px"></div>
<svg style="left:990px;top:458px" width="16" height="16" viewBox="0 0 16 16"><circle cx="8" cy="8" r="7.2" fill="none" stroke="#2fbf4f" stroke-width="1.1"/><path d="M4.8 8.4 L7.2 10.8 L11.4 5.6" fill="none" stroke="#2fbf4f" stroke-width="1.2" stroke-linecap="round" stroke-linejoin="round"/></svg>
<div class="t b" id="t-noi" style="left:1017px;top:458px;color:#fff">No Issues</div>
<div class="sep" style="top:490px"></div>
<svg style="left:990px;top:511px" width="8" height="10" viewBox="0 0 8 10"><path class="ic" stroke="#e0e0e0" stroke-width="1.2" d="M2.2 1.4 L5.8 5 L2.2 8.6"/></svg>
<div class="t b" id="t-par" style="left:1006px;top:508px;color:#f2f2f2">Parameters</div>
<div class="sep" style="top:540px"></div>
<svg style="left:989px;top:561px" width="10" height="8" viewBox="0 0 10 8"><path class="ic" stroke="#e0e0e0" stroke-width="1.2" d="M1.4 2.2 L5 5.8 L8.6 2.2"/></svg>
<div class="t b" id="t-pc" style="left:1006px;top:557px;color:#f2f2f2">Part Choices (4)</div>
<div class="card" style="top:581px"></div>
<div class="t link" id="t-cp0" style="left:998px;top:589px">C0402C103K5RAC</div>
<div class="t" id="t-cm0" style="left:998px;top:609px;color:#f2f2f2">KEMET</div>
<svg style="left:998px;top:632px" width="17" height="18" viewBox="0 0 17 18"><g class="ic" stroke="#e6e6e6" stroke-width="1.05"><path d="M8.5 1.2 L15.6 4.6 V13 L8.5 16.8 L1.4 13 V4.6 Z"/><path d="M1.4 4.6 L8.5 8.2 L15.6 4.6 M8.5 8.2 V16.8 M4.9 2.9 L12.1 6.4"/></g></svg>
<div class="t" id="t-q1" style="left:1022px;top:633px;color:#f2f2f2">880k</div>
<svg style="left:1138.5px;top:632.5px" width="17" height="17" viewBox="0 0 17 17"><circle cx="8.5" cy="8.5" r="7.6" fill="none" stroke="#e6e6e6" stroke-width="1.05"/><text x="8.5" y="12.4" text-anchor="middle" font-family="Liberation Sans, sans-serif" font-size="11" fill="#e6e6e6">$</text></svg>
<div class="t" id="t-p1" style="left:1164px;top:633px;color:#f2f2f2">$0.0095</div>
<div class="card" style="top:665px"></div>
<div class="abs" style="left:998px;top:674px;width:41px;height:14px;background:#2f7fe6;border-radius:2px"></div>
<div class="t b" id="t-inuse" style="left:1002px;top:673px;font-size:10.5px;color:#fff">In use</div>
<div class="t link" id="t-cp1" style="left:1043px;top:673px">GRM155R71H103KA88D</div>
<div class="t" id="t-cm1" style="left:998px;top:693px;color:#f2f2f2">Murata</div>
<svg style="left:998px;top:716px" width="17" height="18" viewBox="0 0 17 18"><g class="ic" stroke="#e6e6e6" stroke-width="1.05"><path d="M8.5 1.2 L15.6 4.6 V13 L8.5 16.8 L1.4 13 V4.6 Z"/><path d="M1.4 4.6 L8.5 8.2 L15.6 4.6 M8.5 8.2 V16.8 M4.9 2.9 L12.1 6.4"/></g></svg>
<div class="t" id="t-q2" style="left:1022px;top:717px;color:#f2f2f2">18,437k</div>
<svg style="left:1138.5px;top:716.5px" width="17" height="17" viewBox="0 0 17 17"><circle cx="8.5" cy="8.5" r="7.6" fill="none" stroke="#e6e6e6" stroke-width="1.05"/><text x="8.5" y="12.4" text-anchor="middle" font-family="Liberation Sans, sans-serif" font-size="11" fill="#e6e6e6">$</text></svg>
<div class="t" id="t-p2" style="left:1164px;top:717px;color:#f2f2f2">$0.002</div>
<div class="card" style="top:749px"></div>
<div class="t link" id="t-cp2" style="left:998px;top:757px">VJ0402Y103KXAAC</div>
<div class="t" id="t-cm2" style="left:998px;top:777px;color:#f2f2f2">Vishay Semiconductors</div>
<svg style="left:998px;top:800px" width="17" height="18" viewBox="0 0 17 18"><g class="ic" stroke="#e6e6e6" stroke-width="1.05"><path d="M8.5 1.2 L15.6 4.6 V13 L8.5 16.8 L1.4 13 V4.6 Z"/><path d="M1.4 4.6 L8.5 8.2 L15.6 4.6 M8.5 8.2 V16.8 M4.9 2.9 L12.1 6.4"/></g></svg>
<div class="t" id="t-q3" style="left:1022px;top:801px;color:#f2f2f2">74k</div>
<svg style="left:1138.5px;top:800.5px" width="17" height="17" viewBox="0 0 17 17"><circle cx="8.5" cy="8.5" r="7.6" fill="none" stroke="#e6e6e6" stroke-width="1.05"/><text x="8.5" y="12.4" text-anchor="middle" font-family="Liberation Sans, sans-serif" font-size="11" fill="#e6e6e6">$</text></svg>
<div class="t" id="t-p3" style="left:1164px;top:801px;color:#f2f2f2">$0.0367</div>
<div class="card" style="top:833px"></div>
<div class="t link" id="t-cp3" style="left:998px;top:841px">CC0402KRX7R9BB103</div>
<div class="t" id="t-cm3" style="left:998px;top:861px;color:#f2f2f2">Yageo</div>
<svg style="left:998px;top:884px" width="17" height="18" viewBox="0 0 17 18"><g class="ic" stroke="#e6e6e6" stroke-width="1.05"><path d="M8.5 1.2 L15.6 4.6 V13 L8.5 16.8 L1.4 13 V4.6 Z"/><path d="M1.4 4.6 L8.5 8.2 L15.6 4.6 M8.5 8.2 V16.8 M4.9 2.9 L12.1 6.4"/></g></svg>
<div class="t" id="t-q4" style="left:1022px;top:885px;color:#f2f2f2">4,298k</div>
<svg style="left:1138.5px;top:884.5px" width="17" height="17" viewBox="0 0 17 17"><circle cx="8.5" cy="8.5" r="7.6" fill="none" stroke="#e6e6e6" stroke-width="1.05"/><text x="8.5" y="12.4" text-anchor="middle" font-family="Liberation Sans, sans-serif" font-size="11" fill="#e6e6e6">$</text></svg>
<div class="t" id="t-p4" style="left:1164px;top:885px;color:#f2f2f2">$0.0032</div>
<div class="sep" style="top:925px"></div>
<svg style="left:990px;top:945px" width="8" height="10" viewBox="0 0 8 10"><path class="ic" stroke="#e0e0e0" stroke-width="1.2" d="M2.2 1.4 L5.8 5 L2.2 8.6"/></svg>
<div class="t b" id="t-wu" style="left:1006px;top:942px;color:#f2f2f2">Where Used</div>
<div class="t link" id="t-rep" style="left:990px;top:1009px">Report Data Quality Issue</div>
<!-- ================= STATUS BAR ================= -->
<svg style="left:32px;top:1048px" width="16" height="16" viewBox="0 0 16 16"><circle cx="8" cy="8" r="7.2" fill="none" stroke="#2fbf4f" stroke-width="1.1"/><path d="M4.8 8.4 L7.2 10.8 L11.4 5.6" fill="none" stroke="#2fbf4f" stroke-width="1.2" stroke-linecap="round" stroke-linejoin="round"/></svg>
<div class="t" id="t-st0" style="left:56px;top:1048px;color:#e6e6e6">0 Issues</div>
<div class="t" id="t-z1a" style="left:883px;top:1048px;color:#e6e6e6">Lines</div>
<div class="t b" id="t-z1b" style="left:918px;top:1048px;color:#fff">7</div>
<div class="t" id="t-z2a" style="left:936px;top:1048px;color:#e6e6e6">Components</div>
<div class="t b" id="t-z2b" style="left:1013px;top:1048px;color:#fff">41</div>
<div class="t" id="t-z3a" style="left:1039px;top:1048px;color:#e6e6e6">Order Price</div>
<div class="t b" id="t-z3b" style="left:1108px;top:1048px;color:#fff">$5.85</div>
<div class="t" id="t-z4a" style="left:1153px;top:1048px;color:#e6e6e6">Price per Board</div>
<div class="t b" id="t-z4b" style="left:1244px;top:1048px;color:#fff">$5.61</div>


<!-- ================= OVERLAY ================= -->
<svg style="left:0;top:0;pointer-events:none" width="1293" height="1072" viewBox="0 0 1293 1072">
  <rect x="159.6" y="208.6" width="810.8" height="58.8" rx="7.5" fill="none" stroke="#ff6f00" stroke-width="3.2"/>
  <rect x="984.6" y="659.5" width="300.9" height="89.9" rx="7.5" fill="none" stroke="#ff6f00" stroke-width="3.2"/>
  <path d="M1131 400 L1149.2 391 L1146.4 397.9 H1184.2 V402.1 H1146.4 L1149.2 409 Z" fill="#ff6f00"/>
  <!-- hand cursor -->
  <g transform="translate(312.6 237) scale(1.1 1.04)">
    <path d="M6 1.6 Q6 0.5 7.1 0.5 Q8.2 0.5 8.2 1.6 V7 Q8.3 5.9 9.4 5.9 Q10.5 5.9 10.6 7.2 V7.7 Q10.8 6.7 11.8 6.7 Q12.9 6.7 13 7.9 V8.6 Q13.2 7.7 14.2 7.7 Q15.3 7.7 15.4 8.9 C15.5 11.2 15.6 14.5 15.3 16.4 C14.9 19.6 13 22.2 9.7 22.2 C7.6 22.2 6.2 21.1 5 19.5 L1.2 14.3 Q0.4 13.1 1.4 12.4 Q2.4 11.8 3.6 12.8 L6 14.9 Z" fill="#fff" stroke="#0a0c12" stroke-width="0.9" stroke-linejoin="round"/>
    <path d="M8.3 7.2V11.2M10.7 7.8V11.4M13.1 8.6V11.4" stroke="#0a0c12" stroke-width="0.8" fill="none"/>
  </g>
</svg>

</body>
</html>
